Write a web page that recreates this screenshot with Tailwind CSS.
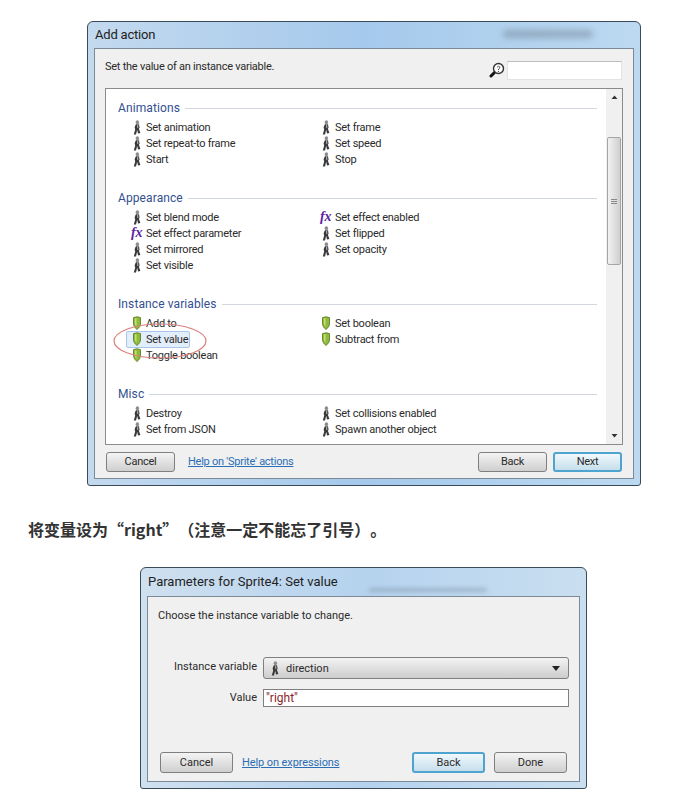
<!DOCTYPE html>
<html lang="en">
<head>
  <meta charset="UTF-8">
  <title>Add action</title>
  <script src="https://cdn.jsdelivr.net/npm/@tailwindcss/browser@4"></script>
</head>
<body class="bg-white h-[806px] overflow-hidden font-['Roboto',sans-serif] text-[11px] leading-[16px] text-[#2b2b2b]">
  <!-- shared icons -->
  <svg class="hidden">
    <symbol id="sprite" viewBox="0 0 8 15">
      <ellipse cx="4.4" cy="2.2" rx="1.7" ry="2" fill="#8d8d8d"/>
      <path d="M2.8 4.2 L6 4.2 L6.6 8 L5.8 8.6 L7.4 13 L5 13.4 L4.2 9.8 L3 14.4 L0.8 14.4 L2.2 9.4 L1.6 7.4 Z" fill="#3a3a3a"/>
      <path d="M4 4.6 L5.2 4.6 L5.4 8 L4.2 8 Z" fill="#a9a9a9"/>
    </symbol>
    <symbol id="pin" viewBox="0 0 9 14">
      <path d="M1 1.6 Q4.5 0 8 1.6 L8 8 Q8 10.6 4.5 13.6 Q1 10.6 1 8 Z" fill="#8ebb3b" stroke="#5f8028" stroke-width="0.9"/>
      <path d="M2.4 2.4 L4 2 L4 10.5 Q2.4 9.2 2.4 7.6 Z" fill="#c3dd7a"/>
    </symbol>
  </svg>

  <!-- Add action dialog -->
  <div class="relative ml-[87px] mt-[21px] w-[554px] h-[465px] rounded-t-[6px] rounded-b-[3px] border border-[#3b4a58] bg-gradient-to-r from-[#c3d9ee] via-[#a5c9ec] to-[#bcd9f0] px-[6px] pb-[6px] flex flex-col tracking-[-0.25px]">
    <div class="h-[26px] flex items-center pl-[1px] text-[13px] tracking-[-0.2px] text-[#222]">Add action</div>
    <div class="absolute left-[415px] top-[8px] w-[90px] h-[8px] rounded-full bg-[#6f8193]/50 blur-[3px]"></div>

    <div class="flex-1 border border-[#7c8a98] bg-[#f0f0f0] px-[10px] flex flex-col">
      <div class="h-[39px] flex items-center justify-between">
        <span class="-mt-[3px]">Set the value of an instance variable.</span>
        <div class="flex items-center gap-[2px] mr-[1px] mt-[3px]">
          <svg width="16" height="16" viewBox="0 0 16 16">
            <path d="M5.5 10.5 L2 14" stroke="#111" stroke-width="3" stroke-linecap="round"/>
            <circle cx="9.5" cy="6.5" r="5" fill="#fff" stroke="#333" stroke-width="1.4"/>
            <path d="M8 5.2 Q9.5 3.4 11 5.2 Q11 6.4 9.5 7 L9.5 8" fill="none" stroke="#555" stroke-width="1"/>
            <circle cx="9.5" cy="9.4" r="0.6" fill="#555"/>
          </svg>
          <div class="w-[115px] h-[19px] bg-white border border-[#e2e2e2] border-t-[#bdbdbd]"></div>
        </div>
      </div>

      <!-- action list -->
      <div class="h-[357px] bg-white border border-[#8b8b8b] flex overflow-hidden">
        <div class="flex-1 pt-[11px] pl-[12px] pr-[9px]">
          <section class="mb-[23px]">
            <div class="h-[16px] flex items-center gap-[5px] text-[12px] text-[#33508f] tracking-[0.1px]">Animations<span class="flex-1 h-px bg-[#d3d8e0]"></span></div>
            <div class="mt-[3px] ml-[13px] grid grid-cols-[189px_1fr] auto-rows-[16px] [&>div]:pt-[2px] [&_svg]:-mt-[2px]">
              <div class="flex items-center gap-[3px]"><svg class="w-[12px] h-[15px]"><use href="#sprite"/></svg>Set animation</div>
              <div class="flex items-center gap-[3px]"><svg class="w-[12px] h-[15px]"><use href="#sprite"/></svg>Set frame</div>
              <div class="flex items-center gap-[3px]"><svg class="w-[12px] h-[15px]"><use href="#sprite"/></svg>Set repeat-to frame</div>
              <div class="flex items-center gap-[3px]"><svg class="w-[12px] h-[15px]"><use href="#sprite"/></svg>Set speed</div>
              <div class="flex items-center gap-[3px]"><svg class="w-[12px] h-[15px]"><use href="#sprite"/></svg>Start</div>
              <div class="flex items-center gap-[3px]"><svg class="w-[12px] h-[15px]"><use href="#sprite"/></svg>Stop</div>
            </div>
          </section>

          <section class="mb-[23px]">
            <div class="h-[16px] flex items-center gap-[5px] text-[12px] text-[#33508f] tracking-[0.1px]">Appearance<span class="flex-1 h-px bg-[#d3d8e0]"></span></div>
            <div class="mt-[3px] ml-[13px] grid grid-cols-[189px_1fr] auto-rows-[16px] [&>div]:pt-[2px] [&_svg]:-mt-[2px]">
              <div class="flex items-center gap-[3px]"><svg class="w-[12px] h-[15px]"><use href="#sprite"/></svg>Set blend mode</div>
              <div class="flex items-center gap-[3px]"><span class="w-[12px] -mt-[2px] font-['Liberation_Serif',serif] italic font-bold text-[14px] text-[#5c1e9e]">fx</span>Set effect enabled</div>
              <div class="flex items-center gap-[3px]"><span class="w-[12px] -mt-[2px] font-['Liberation_Serif',serif] italic font-bold text-[14px] text-[#5c1e9e]">fx</span>Set effect parameter</div>
              <div class="flex items-center gap-[3px]"><svg class="w-[12px] h-[15px]"><use href="#sprite"/></svg>Set flipped</div>
              <div class="flex items-center gap-[3px]"><svg class="w-[12px] h-[15px]"><use href="#sprite"/></svg>Set mirrored</div>
              <div class="flex items-center gap-[3px]"><svg class="w-[12px] h-[15px]"><use href="#sprite"/></svg>Set opacity</div>
              <div class="flex items-center gap-[3px]"><svg class="w-[12px] h-[15px]"><use href="#sprite"/></svg>Set visible</div>
            </div>
          </section>

          <section class="mb-[23px]">
            <div class="h-[16px] flex items-center gap-[5px] text-[12px] text-[#33508f] tracking-[0.1px]">Instance variables<span class="flex-1 h-px bg-[#d3d8e0]"></span></div>
            <div class="mt-[3px] ml-[13px] grid grid-cols-[189px_1fr] auto-rows-[16px] [&>div]:pt-[2px] [&_svg]:-mt-[2px]">
              <div class="flex items-center gap-[3px]"><svg class="w-[12px] h-[14px]"><use href="#pin"/></svg>Add to</div>
              <div class="flex items-center gap-[3px]"><svg class="w-[12px] h-[14px]"><use href="#pin"/></svg>Set boolean</div>
              <div class="flex items-center gap-[3px] relative"><span class="absolute -left-[5px] top-0 w-[64px] h-[17px] bg-[#e3eefb] border border-[#a9c6ea] rounded-[2px]"></span><svg class="relative w-[12px] h-[14px]"><use href="#pin"/></svg><span class="relative">Set value</span></div>
              <div class="flex items-center gap-[3px]"><svg class="w-[12px] h-[14px]"><use href="#pin"/></svg>Subtract from</div>
              <div class="flex items-center gap-[3px]"><svg class="w-[12px] h-[14px]"><use href="#pin"/></svg>Toggle boolean</div>
            </div>
          </section>

          <section>
            <div class="h-[16px] flex items-center gap-[5px] text-[12px] text-[#33508f] tracking-[0.1px]">Misc<span class="flex-1 h-px bg-[#d3d8e0]"></span></div>
            <div class="mt-[3px] ml-[13px] grid grid-cols-[189px_1fr] auto-rows-[16px] [&>div]:pt-[2px] [&_svg]:-mt-[2px]">
              <div class="flex items-center gap-[3px]"><svg class="w-[12px] h-[15px]"><use href="#sprite"/></svg>Destroy</div>
              <div class="flex items-center gap-[3px]"><svg class="w-[12px] h-[15px]"><use href="#sprite"/></svg>Set collisions enabled</div>
              <div class="flex items-center gap-[3px]"><svg class="w-[12px] h-[15px]"><use href="#sprite"/></svg>Set from JSON</div>
              <div class="flex items-center gap-[3px]"><svg class="w-[12px] h-[15px]"><use href="#sprite"/></svg>Spawn another object</div>
            </div>
          </section>
        </div>

        <!-- scrollbar -->
        <div class="w-[16px] bg-[#f0f0f0] flex flex-col items-center">
          <svg class="mt-[6px] shrink-0" width="7" height="5" viewBox="0 0 7 5"><path d="M3.5 0.5 L6.5 4 L0.5 4 Z" fill="#333"/></svg>
          <div class="mt-[37px] w-[14px] h-[128px] rounded-[2px] border border-[#a5a5a5] bg-gradient-to-r from-[#f2f2f2] to-[#cfcfcf] flex flex-col items-center justify-center gap-px">
            <span class="w-[6px] h-px bg-[#888]"></span><span class="w-[6px] h-px bg-[#888]"></span><span class="w-[6px] h-px bg-[#888]"></span>
          </div>
          <svg class="mt-auto mb-[6px] shrink-0" width="7" height="5" viewBox="0 0 7 5"><path d="M0.5 1 L6.5 1 L3.5 4.5 Z" fill="#333"/></svg>
        </div>
      </div>

      <!-- footer buttons -->
      <div class="flex-1 flex items-center">
        <button class="ml-[1px] w-[69px] h-[20px] rounded-[3px] border border-[#7f7f7f] bg-gradient-to-b from-[#f4f4f4] to-[#cfcfcf] text-[11px] leading-none">Cancel</button>
        <a class="ml-[13px] text-[#2a6fb5] underline">Help on 'Sprite' actions</a>
        <button class="ml-auto w-[69px] h-[20px] rounded-[3px] border border-[#7f7f7f] bg-gradient-to-b from-[#f4f4f4] to-[#cfcfcf] text-[11px] leading-none">Back</button>
        <button class="ml-[6px] mr-[1px] w-[69px] h-[20px] rounded-[3px] border-2 border-[#4fa3cf] bg-gradient-to-b from-[#f0f8fc] to-[#c6dfec] text-[11px] leading-none">Next</button>
      </div>
    </div>

    <!-- red ellipse annotation -->
    <svg class="absolute left-[25px] top-[301px]" width="94" height="36" viewBox="0 0 94 36"><ellipse cx="47" cy="18" rx="46" ry="17" fill="none" stroke="#d9807c" stroke-width="1.2"/></svg>
  </div>

  <p lang="zh-CN" class="mt-[32px] ml-[28px] h-[22px] leading-[22px] text-[16px] font-bold text-[#333] [text-spacing-trim:space-all] font-['Noto_Sans_CJK_SC',sans-serif]">将变量设为“right”（注意一定不能忘了引号）。</p>

  <!-- Parameters dialog -->
  <div class="relative mt-[27px] ml-[140px] w-[447px] h-[222px] rounded-t-[6px] rounded-b-[3px] border border-[#3b4a58] bg-gradient-to-r from-[#cfe0ef] via-[#b5d2ee] to-[#c9dff0] px-[6px] pb-[6px] flex flex-col">
    <div class="h-[28px] flex items-center pl-[1px] text-[13px] text-[#222]">Parameters for Sprite4: Set value</div>
    <div class="absolute left-[228px] top-[20px] w-[118px] h-[4px] rounded-full bg-[#6f8193]/40 blur-[2px]"></div>
    <div class="flex-1 border border-[#7c8a98] bg-[#f0f0f0] px-[10px] flex flex-col">
      <div class="mt-[11px] h-[16px]">Choose the instance variable to change.</div>
      <div class="mt-[33px] ml-[5px] flex items-center h-[22px]">
        <span class="w-[94px] text-right -mt-[3px]">Instance variable</span>
        <div class="ml-[6px] w-[306px] h-[22px] rounded-[3px] border border-[#7f7f7f] bg-gradient-to-b from-[#f3f3f3] to-[#cdcdcd] flex items-center pl-[5px] pr-[8px]">
          <svg class="w-[12px] h-[15px]"><use href="#sprite"/></svg>
          <span class="ml-[5px] mt-[2px]">direction</span>
          <svg class="ml-auto" width="8" height="5" viewBox="0 0 8 5"><path d="M0 0 L8 0 L4 5 Z" fill="#222"/></svg>
        </div>
      </div>
      <div class="mt-[10px] ml-[5px] flex items-center h-[18px]">
        <span class="w-[94px] text-right -mt-[1px]">Value</span>
        <div class="ml-[6px] w-[306px] h-[18px] border border-[#7f7f7f] bg-white pl-[2px] flex items-center text-[#8a1f2b] text-[12px]">"right"</div>
      </div>
      <div class="mt-auto mb-[8px] flex items-center">
        <button class="ml-[2px] w-[73px] h-[21px] rounded-[3px] border border-[#7f7f7f] bg-gradient-to-b from-[#f4f4f4] to-[#cfcfcf] text-[11px] leading-none">Cancel</button>
        <a class="ml-[9px] text-[#2a6fb5] underline tracking-[-0.1px]">Help on expressions</a>
        <button class="ml-auto w-[73px] h-[21px] rounded-[3px] border-2 border-[#4fa3cf] bg-gradient-to-b from-[#f0f8fc] to-[#c6dfec] text-[11px] leading-none">Back</button>
        <button class="ml-[9px] mr-[2px] w-[73px] h-[21px] rounded-[3px] border border-[#7f7f7f] bg-gradient-to-b from-[#f4f4f4] to-[#cfcfcf] text-[11px] leading-none">Done</button>
      </div>
    </div>
  </div>
</body>
</html>
